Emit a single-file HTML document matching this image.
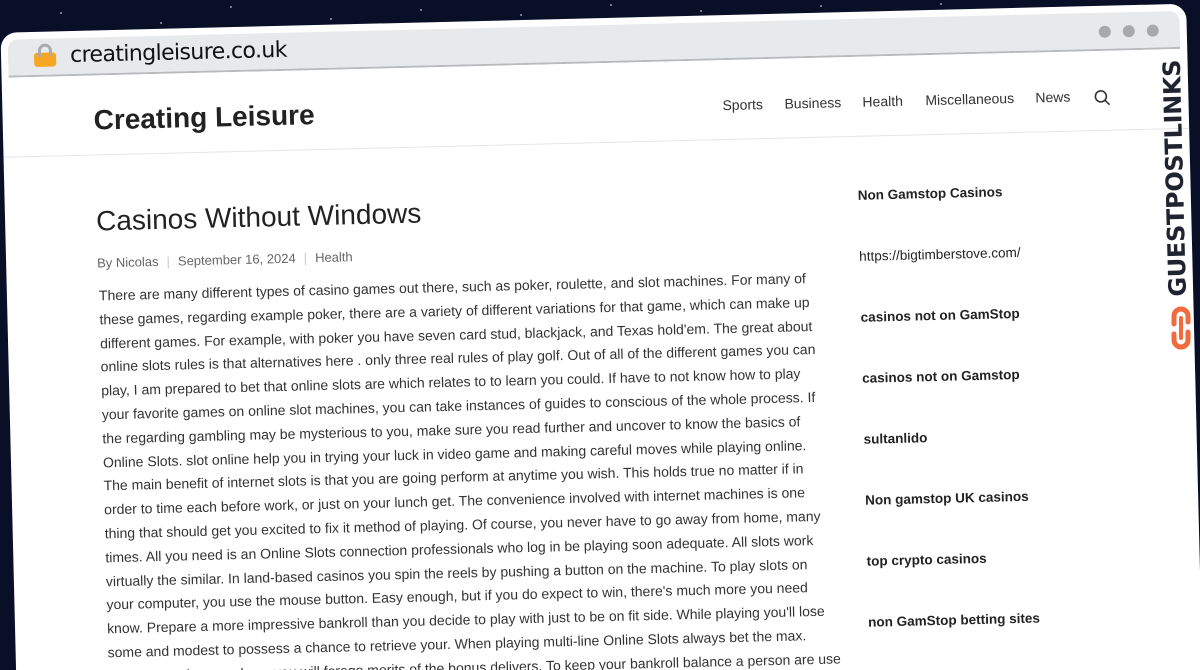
<!DOCTYPE html>
<html><head><meta charset="utf-8"><style>
*{margin:0;padding:0;box-sizing:border-box}
html,body{width:1200px;height:670px;overflow:hidden}
body{background:#0a0f28;font-family:"Liberation Sans",sans-serif;position:relative}
.star{position:absolute;width:2px;height:2px;background:#cfd6ea;border-radius:50%;opacity:.7}
#frame{position:absolute;left:8px;top:18px;width:1186px;height:720px;background:#fff;border-radius:16px;transform:rotate(-1.4deg);transform-origin:600px 315px;overflow:hidden}
#bar{position:absolute;left:7px;top:7px;right:7px;height:38px;background:#e8e9eb;border-bottom:2px solid #b8babd;border-radius:10px 10px 0 0}
.lock{position:absolute;left:26px;top:14px;width:22px;height:14px;background:#f6a623;border-radius:3px}
.lock:before{content:"";position:absolute;left:4px;top:-9px;width:14px;height:13px;border:3px solid #a9abae;border-bottom:none;border-radius:8px 8px 0 0;box-sizing:border-box}
.url{position:absolute;left:62px;top:5px;font-size:22px;color:#111;font-family:"DejaVu Sans","Liberation Sans",sans-serif;letter-spacing:-.6px}
.dot{position:absolute;top:13px;width:12px;height:12px;border-radius:50%;background:#a8a9ac}
.abs{position:absolute;white-space:nowrap}
.logo{left:91px;top:74px;font-size:28px;font-weight:bold;color:#222}
.nav{top:82px;font-size:14px;color:#333}
#hline{position:absolute;left:0;right:0;top:124px;border-top:1px solid #e6e6e6}
h1{position:absolute;left:91px;top:175px;font-size:28px;font-weight:normal;color:#222;white-space:nowrap}
.meta{position:absolute;left:91px;top:225px;font-size:13px;color:#666;white-space:nowrap}
.meta span{color:#ccc;margin:0 8px}
.body{position:absolute;left:92px;top:254px;font-size:14px;line-height:23.8px;color:#333;white-space:nowrap}
.side{position:absolute;left:853px;font-size:13.5px;font-weight:bold;color:#222;white-space:nowrap}
</style></head><body>
<div class="star" style="left:60px;top:12px"></div><div class="star" style="left:160px;top:22px"></div><div class="star" style="left:230px;top:6px"></div><div class="star" style="left:330px;top:18px"></div><div class="star" style="left:420px;top:9px"></div><div class="star" style="left:520px;top:14px"></div><div class="star" style="left:610px;top:4px"></div><div class="star" style="left:700px;top:10px"></div><div class="star" style="left:820px;top:5px"></div><div class="star" style="left:940px;top:3px"></div>
<div id="frame">
<div id="bar"><div class="lock"></div><div class="url">creatingleisure.co.uk</div>
<div class="dot" style="right:69px"></div><div class="dot" style="right:45px"></div><div class="dot" style="right:21px"></div></div>
<div class="abs logo">Creating Leisure</div>
<div class="abs nav" style="left:720px">Sports</div>
<div class="abs nav" style="left:782px">Business</div>
<div class="abs nav" style="left:860px">Health</div>
<div class="abs nav" style="left:923px">Miscellaneous</div>
<div class="abs nav" style="left:1033px">News</div>
<svg class="abs" style="left:1091px;top:83px" width="18" height="18" viewBox="0 0 18 18"><circle cx="7.5" cy="7.5" r="5.5" fill="none" stroke="#333" stroke-width="1.6"/><path d="M11.5 11.5L16 16" stroke="#333" stroke-width="1.6"/></svg>
<div id="hline"></div>
<h1>Casinos Without Windows</h1>
<div class="meta">By Nicolas<span>|</span>September 16, 2024<span>|</span>Health</div>
<div class="body">There are many different types of casino games out there, such as poker, roulette, and slot machines. For many of<br>these games, regarding example poker, there are a variety of different variations for that game, which can make up<br>different games. For example, with poker you have seven card stud, blackjack, and Texas hold'em. The great about<br>online slots rules is that alternatives here . only three real rules of play golf. Out of all of the different games you can<br>play, I am prepared to bet that online slots are which relates to to learn you could. If have to not know how to play<br>your favorite games on online slot machines, you can take instances of guides to conscious of the whole process. If<br>the regarding gambling may be mysterious to you, make sure you read further and uncover to know the basics of<br>Online Slots. slot online help you in trying your luck in video game and making careful moves while playing online.<br>The main benefit of internet slots is that you are going perform at anytime you wish. This holds true no matter if in<br>order to time each before work, or just on your lunch get. The convenience involved with internet machines is one<br>thing that should get you excited to fix it method of playing. Of course, you never have to go away from home, many<br>times. All you need is an Online Slots connection professionals who log in be playing soon adequate. All slots work<br>virtually the similar. In land-based casinos you spin the reels by pushing a button on the machine. To play slots on<br>your computer, you use the mouse button. Easy enough, but if you do expect to win, there's much more you need<br>know. Prepare a more impressive bankroll than you decide to play with just to be on fit side. While playing you'll lose<br>some and modest to possess a chance to retrieve your. When playing multi-line Online Slots always bet the max.<br>Of course, when you lose, you will forego merits of the bonus delivers. To keep your bankroll balance a person are use</div>
<div class="side" style="top:176px">Non Gamstop Casinos</div>
<div class="side" style="top:237px;font-weight:normal">https://bigtimberstove.com/</div>
<div class="side" style="top:298px">casinos not on GamStop</div>
<div class="side" style="top:359px">casinos not on Gamstop</div>
<div class="side" style="top:420px">sultanlido</div>
<div class="side" style="top:481px">Non gamstop UK casinos</div>
<div class="side" style="top:542px">top crypto casinos</div>
<div class="side" style="top:603px">non GamStop betting sites</div>
</div>
<div style="position:absolute;left:1164px;top:297px;transform:rotate(-91.5deg);transform-origin:0 0;font-size:24px;font-weight:bold;color:#1f2430;font-family:'DejaVu Sans','Liberation Sans',sans-serif;white-space:nowrap;letter-spacing:-.3px">GUESTPOSTLINKS</div>
<svg style="position:absolute;left:1168px;top:304px" width="26" height="48" viewBox="0 0 26 48"><path d="M6 20V12a7 7 0 0 1 14 0v6M20 28v8a7 7 0 0 1-14 0v-6" fill="none" stroke="#f26a3d" stroke-width="5" stroke-linecap="round"/><path d="M13 14v20" stroke="#f26a3d" stroke-width="4" stroke-linecap="round"/></svg>
</body></html>
